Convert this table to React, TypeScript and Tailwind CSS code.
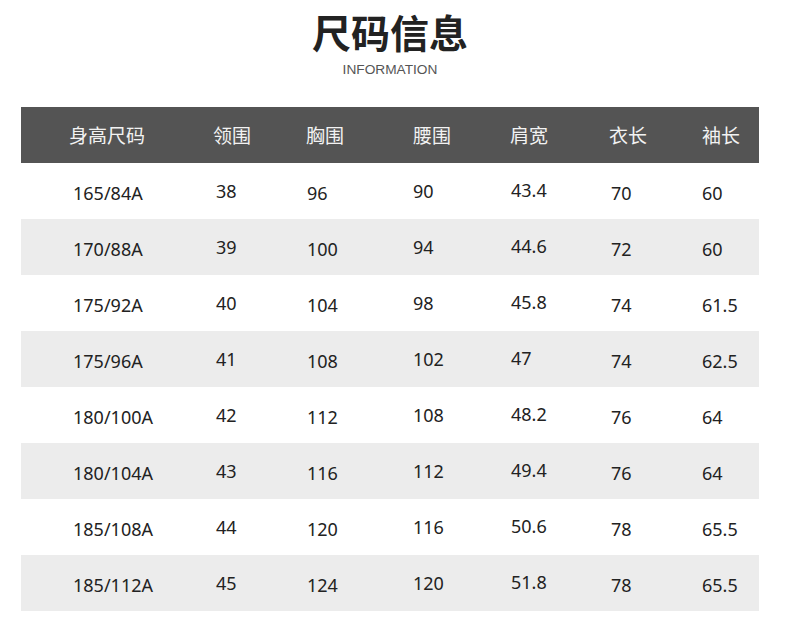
const HEAD = ['身高尺码', '领围', '胸围', '腰围', '肩宽', '衣长', '袖长']

const ROWS = [
  ['165/84A', '38', '96', '90', '43.4', '70', '60'],
  ['170/88A', '39', '100', '94', '44.6', '72', '60'],
  ['175/92A', '40', '104', '98', '45.8', '74', '61.5'],
  ['175/96A', '41', '108', '102', '47', '74', '62.5'],
  ['180/100A', '42', '112', '108', '48.2', '76', '64'],
  ['180/104A', '43', '116', '112', '49.4', '76', '64'],
  ['185/108A', '44', '120', '116', '50.6', '78', '65.5'],
  ['185/112A', '45', '124', '120', '51.8', '78', '65.5'],
]

// each column sits a little off in the original, nudge per column
const CELL = [
  'pl-[4px] pt-[18px]',
  'pl-[3px] pt-[16px]',
  'pl-[1px] pt-[18px]',
  'pl-0 pt-[16px]',
  'pl-[1px] pt-[14.5px]',
  'pl-[2px] pt-[18px]',
  'pl-0 pt-[18px]',
]

const GRID = 'grid grid-cols-[144px_93px_107px_97px_99px_93px_57px] pl-[48px]'

export default function App() {
  return (
    <div className="w-[790px] h-[635px] bg-white" style={{ fontFamily: '"Noto Sans", "Noto Sans CJK SC", sans-serif' }}>
      <div className="ml-[21px] w-[738px] flex flex-col">
        <div className="flex flex-col items-center pt-[6px]">
          <h1 className="text-[39px] leading-[50px] font-bold text-[#222]" style={{ fontFamily: '"Noto Sans CJK SC", sans-serif' }}>
            尺码信息
          </h1>
          <div className="mt-[6px] text-[13.7px] leading-[16px] text-[#555]" style={{ fontFamily: '"Liberation Sans", Arial, sans-serif' }}>
            INFORMATION
          </div>
        </div>

        <div className="mt-[29px]">
          <div className={`${GRID} h-[56px] bg-[#545454] items-center`}>
            {HEAD.map(h => (
              <span key={h} className="text-[19px] text-[#f2f2f2]" style={{ fontFamily: '"Noto Sans CJK SC", sans-serif' }}>
                {h}
              </span>
            ))}
          </div>
          {ROWS.map((row, i) => (
            <div key={i} className={`${GRID} h-[56px] ${i % 2 === 1 ? 'bg-[#ececec]' : 'bg-white'}`}>
              {row.map((v, j) => (
                <span key={j} className={`${CELL[j]} text-[18px] leading-[24px] text-[#222]`}>
                  {v}
                </span>
              ))}
            </div>
          ))}
        </div>
      </div>
    </div>
  )
}
